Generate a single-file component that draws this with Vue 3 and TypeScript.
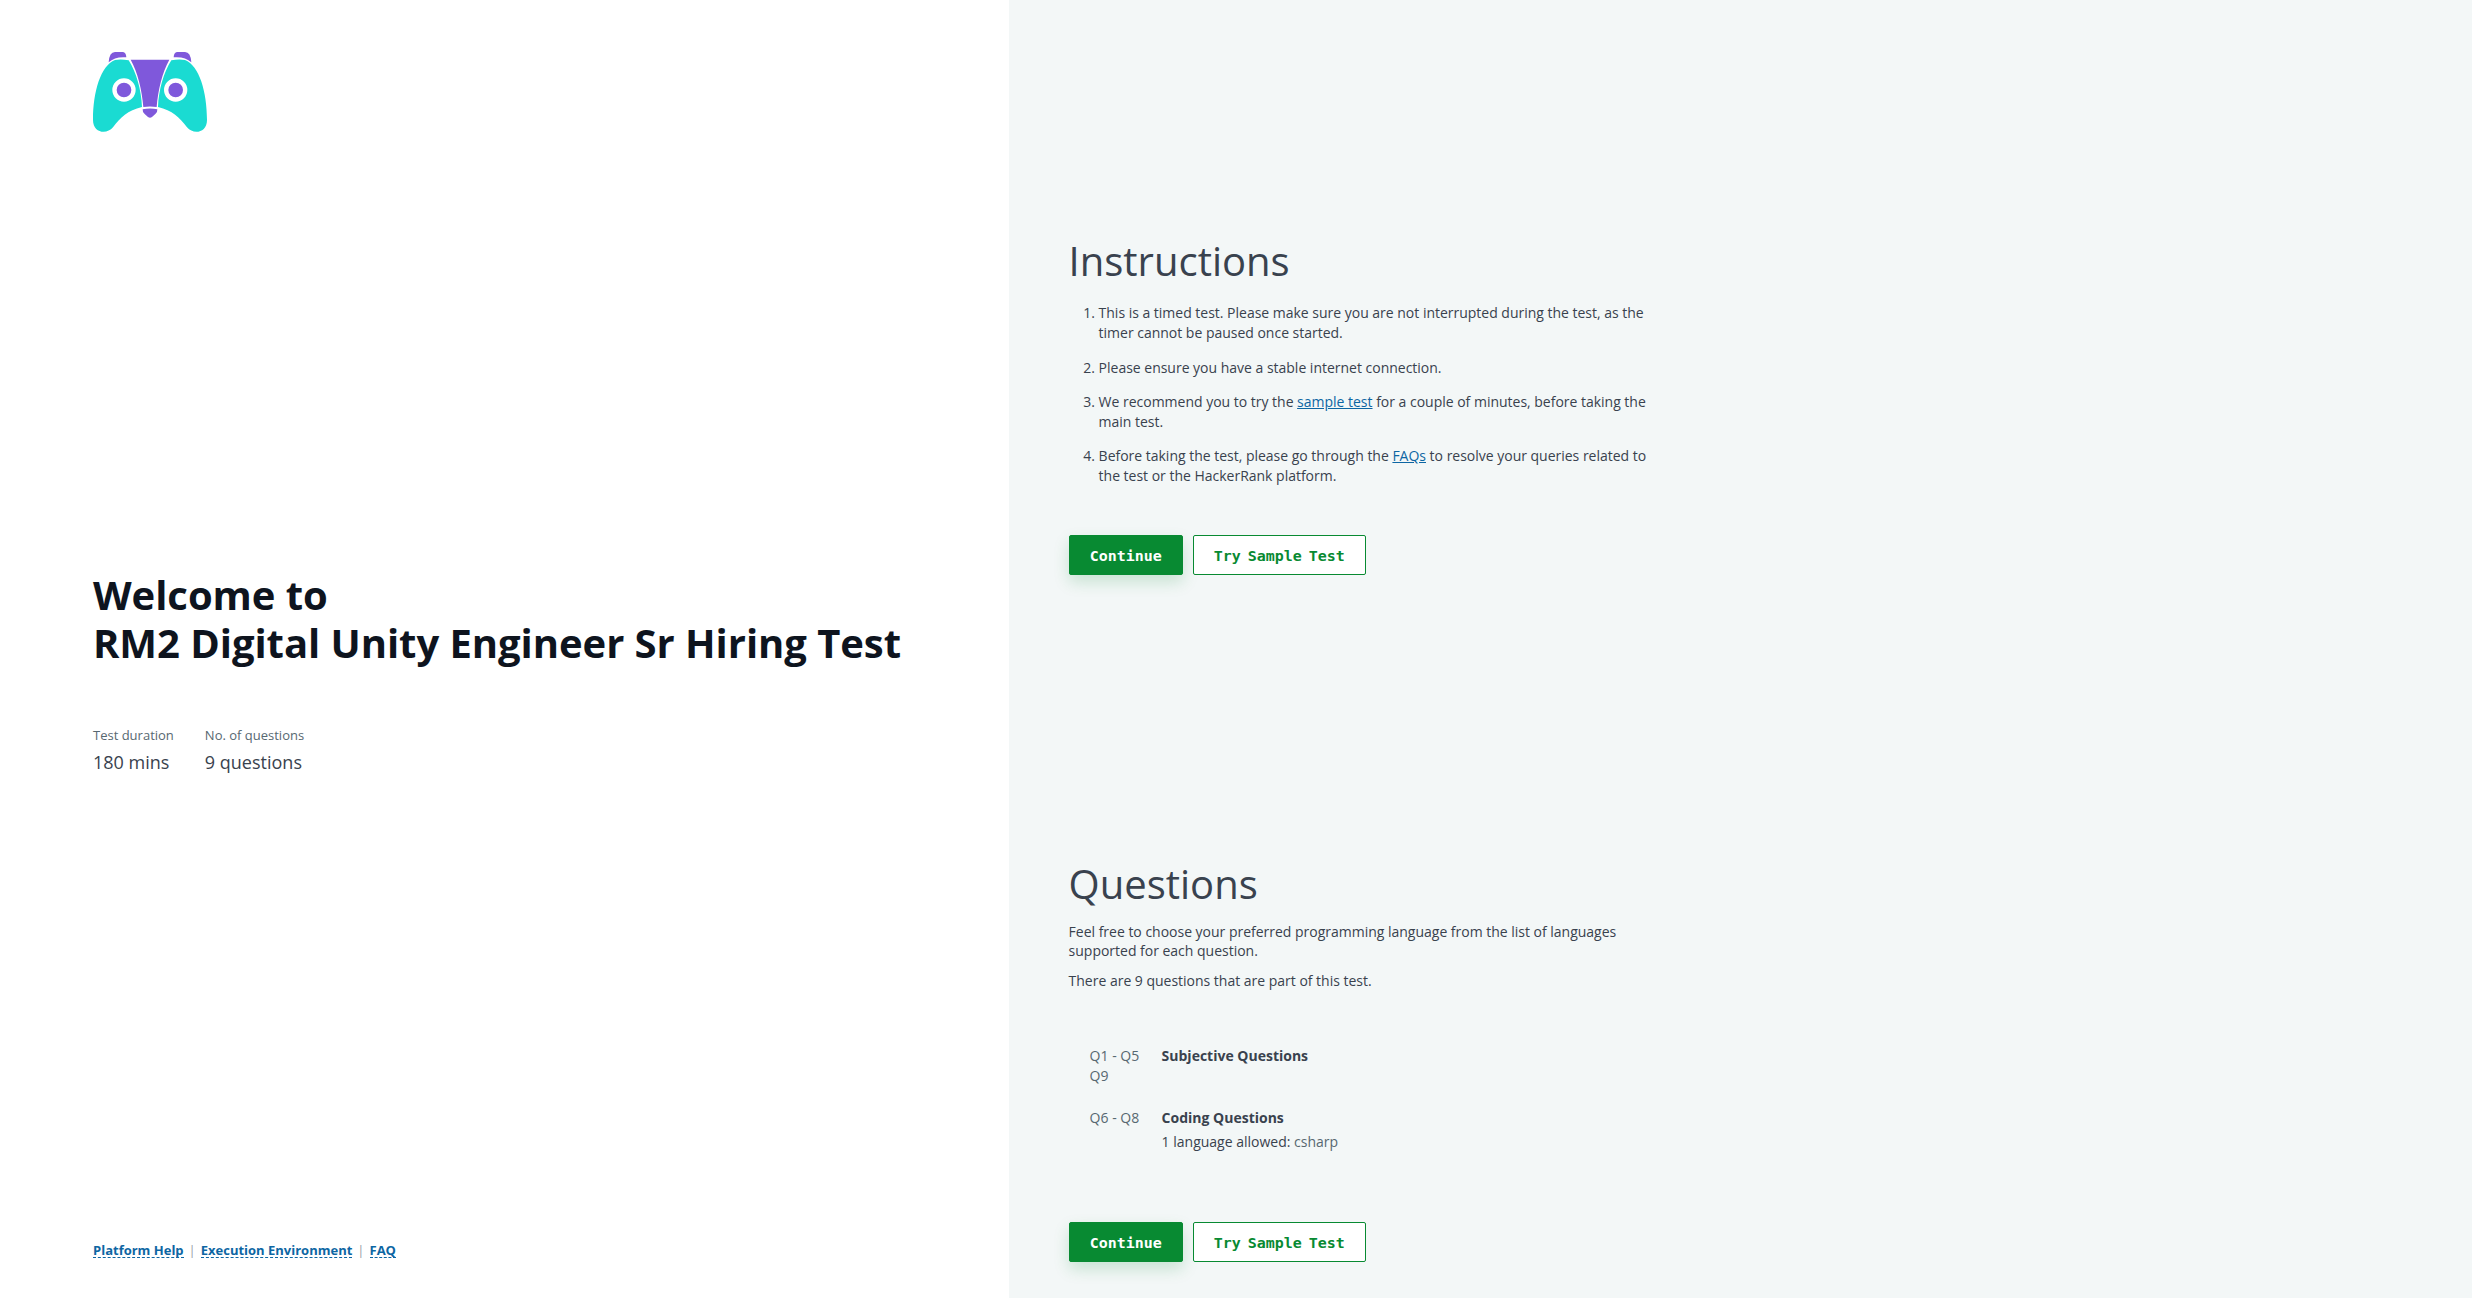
<script setup lang="ts">
interface Stat {
  label: string
  value: string
}

interface QuestionGroup {
  ranges: string[]
  title: string
  note?: string
  languages?: string
}

const stats: Stat[] = [
  { label: 'Test duration', value: '180 mins' },
  { label: 'No. of questions', value: '9 questions' },
]

const groups: QuestionGroup[] = [
  { ranges: ['Q1 - Q5', 'Q9'], title: 'Subjective Questions' },
  { ranges: ['Q6 - Q8'], title: 'Coding Questions', note: '1 language allowed:', languages: 'csharp' },
]

const footerLinks: string[] = ['Platform Help', 'Execution Environment', 'FAQ']
</script>

<template>
  <div class="page">
    <aside class="intro">
      <svg class="logo" viewBox="39 36 342 240" aria-label="Company logo">
        <g fill="#7f58db">
          <path d="M86 67 Q88 36 105 36 H129 Q138 37 139 52 Q105 49 86 67Z" />
          <path d="M334 67 Q332 36 315 36 H291 Q282 37 281 52 Q315 49 334 67Z" />
          <path d="M152 59 H268 C247 96 234 151 230 201 Q210 198 190 201 C186 151 173 96 152 59Z" />
          <path d="M188 208 Q210 203 232 208 Q233 217 226 222 L216 231 Q210 236 204 231 L194 222 Q187 217 188 208Z" />
        </g>
        <g fill="#1adbd2">
          <path d="M105 60 Q122 56 146 61 C169 97 184 150 186 201 C143 211 121 233 99 262 C80 285 39 279 39 240 C39 156 62 77 105 60Z" />
          <path d="M315 60 Q298 56 274 61 C251 97 236 150 234 201 C277 211 299 233 321 262 C340 285 381 279 381 240 C381 156 358 77 315 60Z" />
        </g>
        <g fill="#7f58db" stroke="#fff" stroke-width="13">
          <circle cx="132" cy="150" r="28.5" />
          <circle cx="287" cy="150" r="28.5" />
        </g>
      </svg>

      <div class="welcome">
        <h1>Welcome to<br />RM2 Digital Unity Engineer Sr Hiring Test</h1>
        <dl class="stats">
          <div v-for="s in stats" :key="s.label">
            <dt>{{ s.label }}</dt>
            <dd>{{ s.value }}</dd>
          </div>
        </dl>
      </div>

      <footer>
        <template v-for="(link, i) in footerLinks" :key="link">
          <span v-if="i > 0" class="divider">|</span>
          <a>{{ link }}</a>
        </template>
      </footer>
    </aside>

    <main class="details">
      <section class="instructions">
        <h2>Instructions</h2>
        <ol>
          <li>This is a timed test. Please make sure you are not interrupted during the test, as the timer cannot be paused once started.</li>
          <li>Please ensure you have a stable internet connection.</li>
          <li>We recommend you to try the <a>sample test</a> for a couple of minutes, before taking the main test.</li>
          <li>Before taking the test, please go through the <a>FAQs</a> to resolve your queries related to the test or the HackerRank platform.</li>
        </ol>
        <div class="actions">
          <button class="primary"><span>Continue</span></button>
          <button class="secondary"><span>Try Sample Test</span></button>
        </div>
      </section>

      <section class="questions">
        <h2>Questions</h2>
        <p>Feel free to choose your preferred programming language from the list of languages supported for each question.</p>
        <p>There are 9 questions that are part of this test.</p>
        <div class="groups">
          <div v-for="g in groups" :key="g.title" class="group">
            <div class="ranges">
              <div v-for="r in g.ranges" :key="r">{{ r }}</div>
            </div>
            <div>
              <strong>{{ g.title }}</strong>
              <div v-if="g.note" class="note">{{ g.note }} <span>{{ g.languages }}</span></div>
            </div>
          </div>
        </div>
        <div class="actions">
          <button class="primary"><span>Continue</span></button>
          <button class="secondary"><span>Try Sample Test</span></button>
        </div>
      </section>
    </main>
  </div>
</template>

<style>
body {
  margin: 0;
}
</style>

<style scoped>
.page {
  display: flex;
  width: 100%;
  height: 1298px;
  overflow: hidden;
  background: #fff;
  color: #39424e;
  font: 14px/20px "Open Sans", sans-serif;
}
.intro {
  flex: 0 0 1009px;
  box-sizing: border-box;
  display: flex;
  flex-direction: column;
  padding: 52px 60px 0 93px;
}
.logo {
  display: block;
  width: 114px;
  height: 80px;
}
.welcome {
  margin-top: 439px;
}
h1 {
  margin: 0;
  color: #0e141e;
  font-size: 40px;
  line-height: 48px;
  font-weight: 700;
  letter-spacing: -0.05px;
  white-space: nowrap;
}
.stats {
  display: flex;
  gap: 31px;
  margin: 58px 0 0;
}
dt {
  color: #576871;
  font-size: 13px;
  line-height: 20px;
}
dd {
  margin: 3px 0 0;
  font-size: 18px;
  line-height: 28px;
}
footer {
  display: flex;
  margin-top: 468px;
  font-size: 13px;
  line-height: 13px;
}
footer a {
  border-bottom: 1px dashed #0d66a3;
  color: #0d66a3;
  font-weight: 700;
}
.divider {
  margin: 0 5px;
  color: #97a0a8;
}
.details {
  flex: 1;
  padding-left: 59.6px;
  background: #f3f7f7;
}
section {
  width: 580px;
}
.instructions {
  height: 623px;
  padding-top: 237px;
}
h2 {
  margin: 0;
  font-size: 40px;
  line-height: 48px;
  font-weight: 400;
}
ol {
  margin: 18px 0 0;
  padding-left: 30px;
}
li,
p {
  letter-spacing: -0.012px;
}
li {
  margin-bottom: 14px;
}
li:first-child {
  margin-bottom: 15px;
}
li a {
  color: #0d66a3;
  text-decoration: underline;
}
.actions {
  display: flex;
  gap: 10px;
}
.instructions .actions {
  margin-top: 49px;
}
button {
  display: flex;
  align-items: center;
  justify-content: center;
  box-sizing: border-box;
  width: 114px;
  height: 40px;
  padding: 2px 0 0;
  border: 1px solid #088a32;
  border-radius: 2px;
  font: 700 14px/20px "DejaVu Sans Mono", monospace;
  word-spacing: -1.9px;
  white-space: nowrap;
}
button span {
  transform: scaleX(1.068);
}
.primary {
  background: #088a32;
  color: #fff;
  box-shadow: 0 7px 16px rgba(8, 138, 50, 0.18);
}
.secondary {
  width: 173px;
  background: #fff;
  color: #088a32;
}
p {
  margin: 0 0 11px;
  line-height: 19px;
}
.questions h2 {
  margin-bottom: 14px;
}
.groups {
  display: flex;
  flex-direction: column;
  gap: 22px;
  margin: 56px 0 0 21px;
}
.group {
  display: flex;
}
.ranges {
  width: 72px;
  color: #576871;
}
strong {
  display: block;
  font-weight: 700;
}
.note {
  margin-top: 4px;
}
.note span {
  color: #576871;
}
.questions .actions {
  margin-top: 70px;
}
</style>
